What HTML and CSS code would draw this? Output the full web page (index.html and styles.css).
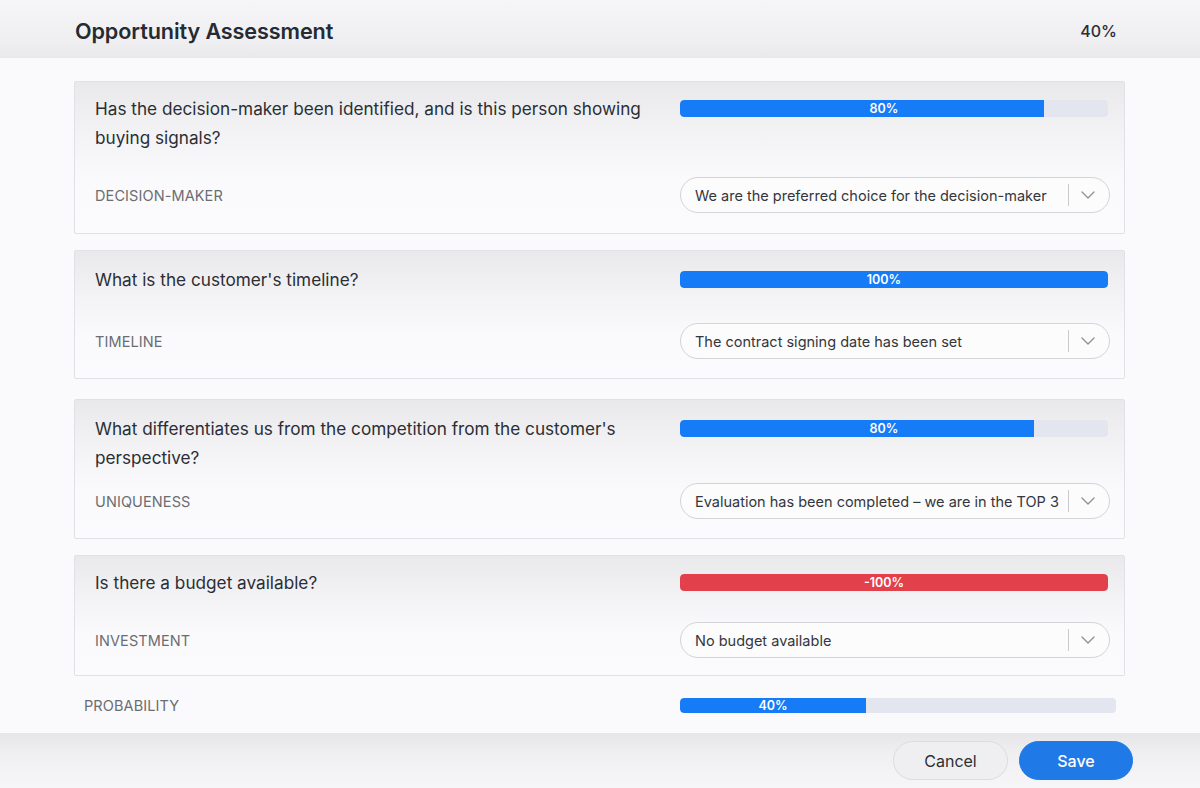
FILE: index.html
```html
<!DOCTYPE html>
<html lang="en">
<head>
<meta charset="utf-8">
<title>Opportunity Assessment</title>
<link rel="stylesheet" href="styles.css">
</head>
<body>
<div class="dialog">
  <header class="dialog-header">
    <h1 class="dialog-title">Opportunity Assessment</h1>
    <span class="dialog-total">40%</span>
  </header>

  <main class="dialog-body">
    <section class="card card-1">
      <div class="question">Has the decision-maker been identified, and is this person showing buying signals?</div>
      <div class="bar"><div class="bar-fill" style="width:85%"></div><span class="bar-label">80%</span></div>
      <div class="field-label">DECISION-MAKER</div>
      <div class="select"><span class="select-value">We are the preferred choice for the decision-maker</span><span class="select-sep"></span><svg class="chevron" viewBox="0 0 14 8" width="14" height="8"><path d="M1 1l6 6 6-6" fill="none" stroke="#8e8f94" stroke-width="1.3" stroke-linecap="round" stroke-linejoin="round"/></svg></div>
    </section>

    <section class="card card-2">
      <div class="question">What is the customer's timeline?</div>
      <div class="bar"><div class="bar-fill" style="width:100%"></div><span class="bar-label">100%</span></div>
      <div class="field-label">TIMELINE</div>
      <div class="select"><span class="select-value">The contract signing date has been set</span><span class="select-sep"></span><svg class="chevron" viewBox="0 0 14 8" width="14" height="8"><path d="M1 1l6 6 6-6" fill="none" stroke="#8e8f94" stroke-width="1.3" stroke-linecap="round" stroke-linejoin="round"/></svg></div>
    </section>

    <section class="card card-3">
      <div class="question">What differentiates us from the competition from the customer's perspective?</div>
      <div class="bar"><div class="bar-fill" style="width:82.7%"></div><span class="bar-label">80%</span></div>
      <div class="field-label">UNIQUENESS</div>
      <div class="select"><span class="select-value">Evaluation has been completed – we are in the TOP 3</span><span class="select-sep"></span><svg class="chevron" viewBox="0 0 14 8" width="14" height="8"><path d="M1 1l6 6 6-6" fill="none" stroke="#8e8f94" stroke-width="1.3" stroke-linecap="round" stroke-linejoin="round"/></svg></div>
    </section>

    <section class="card card-4">
      <div class="question">Is there a budget available?</div>
      <div class="bar bar-negative"><div class="bar-fill" style="width:100%"></div><span class="bar-label">-100%</span></div>
      <div class="field-label">INVESTMENT</div>
      <div class="select"><span class="select-value">No budget available</span><span class="select-sep"></span><svg class="chevron" viewBox="0 0 14 8" width="14" height="8"><path d="M1 1l6 6 6-6" fill="none" stroke="#8e8f94" stroke-width="1.3" stroke-linecap="round" stroke-linejoin="round"/></svg></div>
    </section>

    <div class="probability">
      <div class="field-label">PROBABILITY</div>
      <div class="bar bar-thin"><div class="bar-fill" style="width:42.7%"><span class="bar-label-inner">40%</span></div></div>
    </div>
  </main>

  <footer class="dialog-footer">
    <button class="btn btn-cancel">Cancel</button>
    <button class="btn btn-save">Save</button>
  </footer>
</div>
</body>
</html>
```

FILE: styles.css
```css
* { box-sizing: border-box; }

html, body {
  margin: 0;
  padding: 0;
  height: 100%;
}

body {
  font-family: "Inter", "Lato", "Liberation Sans", sans-serif;
  color: #2b2e35;
  background: #fafafc;
}

.dialog {
  width: 1200px;
  height: 788px;
  display: flex;
  flex-direction: column;
  overflow: hidden;
}

.dialog-header {
  height: 58px;
  flex: 0 0 58px;
  display: flex;
  align-items: center;
  justify-content: space-between;
  padding: 0 83px 0 75px;
  background: linear-gradient(180deg, #f6f6f8 0%, #efeff1 70%, #e9e9eb 100%);
}

.dialog-title {
  margin: 0;
  font-size: 21.6px;
  font-weight: 600;
  letter-spacing: -0.1px;
  color: #262a31;
  padding-top: 3px;
}

.dialog-total {
  font-size: 16px;
  font-weight: 500;
  color: #2b2e35;
  padding-top: 4px;
}

.dialog-body {
  flex: 1;
  padding: 23px 75px 0 74px;
  background: #fafafc;
  display: flex;
  flex-direction: column;
}

.card {
  display: grid;
  grid-template-columns: 1fr 430px;
  column-gap: 20px;
  align-items: start;
  padding: 14px 14px 20px 20px;
  border: 1px solid #e1e1e5;
  border-radius: 2px;
  background: linear-gradient(180deg, #e9e9eb 0%, #f3f3f5 35%, #fafafc 65%, #fbfbfd 100%);
}

.card + .card { margin-top: 16px; }
.card.card-1 { height: 153px; row-gap: 25px; padding-top: 12px; }
.card.card-2 { height: 129px; row-gap: 29px; }
.card.card-3 { height: 140px; row-gap: 11px; margin-top: 20px; }
.card.card-4 { height: 121px; row-gap: 25px; padding-top: 12px; }

.question {
  font-size: 17.2px;
  line-height: 29px;
  color: #2b2e35;
  padding-right: 6px;
}

.bar {
  position: relative;
  width: 428px;
  height: 17px;
  margin-top: 6px;
  background: #e3e6ef;
  border-radius: 4px;
  overflow: hidden;
}

.bar-fill {
  height: 100%;
  background: #157bf6;
  border-radius: 4px 0 0 4px;
}

.bar-fill[style*="100%"] { border-radius: 4px; }

.bar-negative .bar-fill { background: #e2404a; }

.bar-label {
  position: absolute;
  left: 0;
  top: 0;
  width: 100%;
  height: 100%;
  padding-right: 20px;
  text-align: center;
  font-size: 12.5px;
  font-weight: 600;
  line-height: 17px;
  color: #ffffff;
}

.field-label {
  align-self: center;
  font-size: 14.5px;
  color: #6b6d72;
  letter-spacing: 0.1px;
}

.select {
  display: flex;
  align-items: center;
  height: 36px;
  width: 430px;
  padding: 0 14px 0 14px;
  border: 1px solid #d3d3d8;
  border-radius: 18px;
  background: #fcfcfd;
}

.select-value {
  flex: 1;
  min-width: 0;
  font-size: 14.5px;
  color: #33363c;
  white-space: nowrap;
}

.select-sep {
  flex: 0 0 1px;
  width: 1px;
  height: 22px;
  background: #c9c9ce;
  margin: 0 12px 0 4px;
}

.chevron { display: block; flex: 0 0 14px; }

.probability {
  display: grid;
  grid-template-columns: 1fr 436px;
  align-items: center;
  padding: 0 9px 0 10px;
  margin-top: 21px;
}

.bar-thin {
  width: 436px;
  height: 15px;
  margin-top: 0;
}

.bar-thin .bar-fill {
  display: flex;
  align-items: center;
  justify-content: center;
}

.bar-label-inner {
  font-size: 12.5px;
  font-weight: 600;
  color: #ffffff;
  line-height: 15px;
}

.dialog-footer {
  height: 55px;
  flex: 0 0 55px;
  display: flex;
  align-items: center;
  justify-content: flex-end;
  gap: 11px;
  padding: 0 67px 0 0;
  background: linear-gradient(180deg, #e6e6e8 0%, #f0f0f2 40%, #f6f6f8 100%);
}

.btn {
  height: 39px;
  width: 115px;
  border-radius: 20px;
  font-family: inherit;
  font-size: 16px;
  cursor: pointer;
}

.btn-cancel {
  background: #efeff1;
  border: 1px solid #dcdce0;
  color: #2b2e35;
}

.btn-save {
  width: 114px;
  background: #1f7ae8;
  border: 1px solid #1f7ae8;
  color: #ffffff;
  font-weight: 500;
}
```
